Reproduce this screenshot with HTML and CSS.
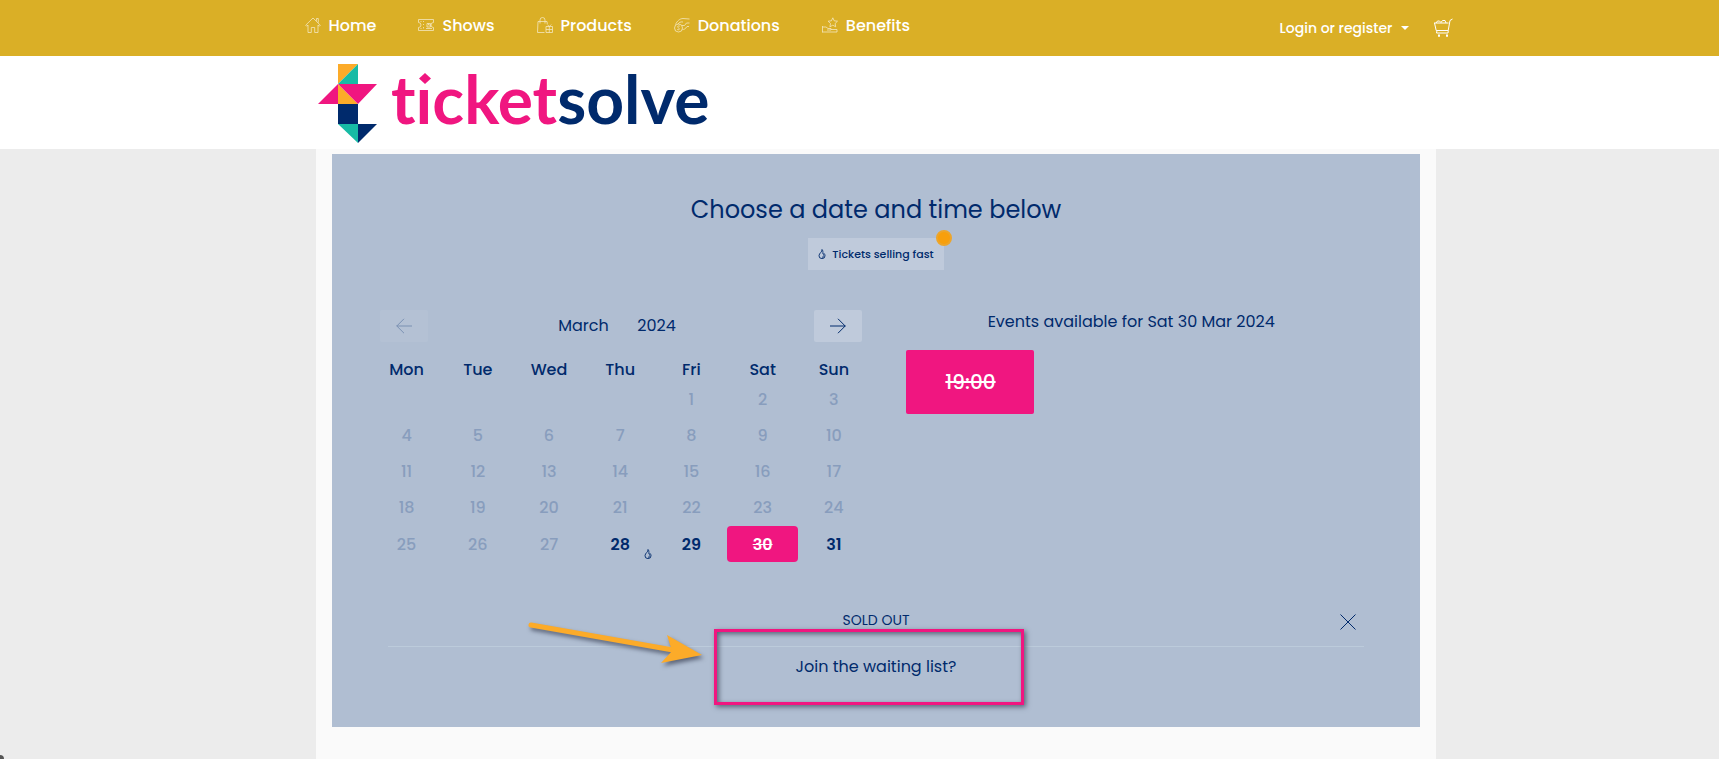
FILE: index.html
```html
<!DOCTYPE html>
<html lang="en">
<head>
    <meta charset="UTF-8">
    <meta name="viewport" content="width=device-width, initial-scale=1.0">
    <title>Ticketsolve</title>
    <link rel="stylesheet" href="styles.css">
</head>
<body>
    <nav class="topbar">
        <div class="topbar-inner">
            <ul class="menu">
                <li><a href="#">
                    <svg viewBox="0 0 16 16"><path d="M.7 8.200 8 1l7.300 7.200-1 1L13 8v7.500H9.700v-5H6.300v5H3V8L1.700 9.200zM11.500 3.800V1.500h1.800v4.200"/></svg>
                    Home</a></li>
                <li><a href="#">
                    <svg viewBox="0 0 16 16"><path d="M.5 2.500h15v3a2.500 2.500 0 0 0 0 5v3H.500v-3a2.500 2.500 0 0 0 0-5zM5.500 4v1M5.500 7v1M5.500 10v1.500M2.500 4.500h1M2.500 11.500h1M9 6.500h3.500v3.500H9zM10.500 6.500v1.500h2M8 11.500h6"/></svg>
                    Shows</a></li>
                <li><a href="#">
                    <svg viewBox="0 0 16 16"><path d="M7.500 15.500H.500L1 4.500h9l.3 2.500M3 6.500V3a2.500 2.500 0 0 1 5 0v3.500M9 9.500h6.500v6H9zM9 12.500h6.500M12.300 9.500v6M12.300 9.500l-2-2M12.300 9.500l2-2"/></svg>
                    Products</a></li>
                <li><a href="#">
                    <svg viewBox="0 0 16 16"><circle cx="4.500" cy="11" r="4"/><path d="M5.800 9.200c-2-1-3 1-1.300 1.700s.8 2.600-1.300 1.600M1.500 7.500C3 4 6 1.500 9 1.500l6.500.5M15.500 6h-3l-2 2.500H8M9 5C6.500 4.500 5 5.500 4 7M15 9.500h-2c-1.500 2.500-3 3-4.500 3"/></svg>
                    Donations</a></li>
                <li><a href="#">
                    <svg viewBox="0 0 16 16"><path d="M10.800.8l1.400 3 3.300.4-2.400 2.300.6 3.300-2.900-1.600-2.900 1.600.6-3.300-2.400-2.300 3.300-.4zM.500 9v6.500M.500 10H4l2 1.500h3V13H5M9 12.500h6v2.500H.500"/></svg>
                    Benefits</a></li>
            </ul>
            <div class="account">
                <button type="button" class="login">Login or register <span class="caret"></span></button>
                <a href="#" class="cart" aria-label="Basket">
                    <svg viewBox="0 0 20 20"><path d="M1 5h14.500M1.500 5l1.700 7.500h12L17 2.500l2.500-1.500M4 12.500l-.5 2.500H15l.3-2.500M3 5l1.500-2h2L8 4.500l1.500-2h2.500l1 2.500M5.500 16.500v2h1v-2M13.500 16.500v2h1v-2"/></svg>
                </a>
            </div>
        </div>
    </nav>

    <header class="brand">
        <a href="#" class="brand-link">
            <svg class="logo" viewBox="0 0 400 80" role="img" aria-label="ticketsolve">
                <path class="orange" d="M20 0h20L20 20zM20 20l20 20H20z"/>
                <path class="teal" d="M40 0v20H20zM20 60h20v19z"/>
                <path class="pink" d="M0 40l20-20v20zM20 20h39L40 40z"/>
                <path class="navy" d="M20 40h20v20H20zM40 60h19L40 79z"/>
                <text x="73" y="60"><tspan class="pink">ticket</tspan><tspan class="navy">solve</tspan></text>
                <circle class="white" cx="107" cy="14" r="8"/>
                <path class="pink" d="M107 9l6 5.500-6 5.500-6-5.500z"/>
            </svg>
        </a>
    </header>

    <main class="page">
        <div class="container">
            <section class="panel">
                <h1>Choose a date and time below</h1>
                <div class="legend">
                    <svg class="flame" viewBox="0 0 8 10"><path d="M4 .5C4.500 3 1 4 1 6.800a2.900 2.700 0 0 0 6 0C7 5.500 6.500 5 6 4.500 6 6 5 5.500 4.800 4.500 5 3 5 1.500 4 .5zM5 9c-.5-1.500 0-2 1.200-2.300"/></svg>
                    Tickets selling fast
                    <span class="dot"></span>
                </div>

                <div class="columns">
                    <div class="calendar">
                        <div class="calendar-head">
                            <button type="button" class="arrow-btn" disabled aria-label="Previous month">
                                <svg viewBox="0 0 16 16"><path d="M16 8H.500M8 .8.800 8 8 15.200"/></svg>
                            </button>
                            <div class="month">
                                <select aria-label="Month"><option>March</option></select>
                                <select aria-label="Year"><option>2024</option></select>
                            </div>
                            <button type="button" class="arrow-btn" aria-label="Next month">
                                <svg viewBox="0 0 16 16"><path d="M0 8h15.500M8 .8 15.200 8 8 15.200"/></svg>
                            </button>
                        </div>
                        <table>
                            <thead>
                                <tr><th>Mon</th><th>Tue</th><th>Wed</th><th>Thu</th><th>Fri</th><th>Sat</th><th>Sun</th></tr>
                            </thead>
                            <tbody>
                                <tr><td></td><td></td><td></td><td></td><td>1</td><td>2</td><td>3</td></tr>
                                <tr><td>4</td><td>5</td><td>6</td><td>7</td><td>8</td><td>9</td><td>10</td></tr>
                                <tr><td>11</td><td>12</td><td>13</td><td>14</td><td>15</td><td>16</td><td>17</td></tr>
                                <tr><td>18</td><td>19</td><td>20</td><td>21</td><td>22</td><td>23</td><td>24</td></tr>
                                <tr class="open">
                                    <td>25</td><td>26</td><td>27</td>
                                    <td>
                                        <button type="button" class="day">28
                                            <svg class="flame" viewBox="0 0 8 10"><path d="M4 .5C4.500 3 1 4 1 6.800a2.900 2.700 0 0 0 6 0C7 5.500 6.500 5 6 4.500 6 6 5 5.500 4.800 4.500 5 3 5 1.500 4 .5zM5 9c-.5-1.500 0-2 1.200-2.300"/></svg>
                                        </button>
                                    </td>
                                    <td><button type="button" class="day">29</button></td>
                                    <td><button type="button" class="day selected">30</button></td>
                                    <td><button type="button" class="day">31</button></td>
                                </tr>
                            </tbody>
                        </table>
                    </div>

                    <div class="events">
                        <h2>Events available for Sat 30 Mar 2024</h2>
                        <button type="button" class="time">19:00</button>
                    </div>
                </div>

                <div class="waiting">
                    <div class="waiting-head">
                        <span>SOLD OUT</span>
                        <button type="button" class="close" aria-label="Close">
                            <svg viewBox="0 0 16 16"><path d="M.5.5l15 15M15.500.5l-15 15"/></svg>
                        </button>
                    </div>
                    <a href="#" class="join">Join the waiting list?</a>
                    <span class="highlight"></span>
                    <svg class="pointer" viewBox="0 0 180 44">
                        <path class="shaft" d="M3 5l142 25"/>
                        <path class="head" d="M139 15l35 20-41 8 11-12z"/>
                    </svg>
                </div>
            </section>
        </div>
    </main>
    <span class="corner"></span>
</body>
</html>
```

FILE: styles.css
```css
* {
    box-sizing: border-box;
}
body {
    margin: 0;
    min-height: 100vh;
    display: flex;
    flex-direction: column;
    background-color: #ececec;
    color: #002a6c;
    font-family: Poppins, Inter, sans-serif;
    font-size: 16px;
}
a {
    color: inherit;
    text-decoration: none;
}
button, select {
    font: inherit;
    color: inherit;
    background: none;
    border: none;
    padding: 0;
    cursor: pointer;
}
svg {
    fill: none;
    stroke: currentColor;
}

/* top bar */
.topbar {
    background-color: #daaf26;
    color: #fff;
    padding-left: 38px;
}
.topbar-inner {
    max-width: 1148px;
    height: 56px;
    margin: 0 auto;
    display: flex;
    justify-content: space-between;
    align-items: center;
}
.menu {
    display: flex;
    gap: 42px;
    margin: 0;
    padding: 0 0 6px;
    list-style: none;
    font-weight: 500;
}
.menu a {
    display: flex;
    align-items: center;
    gap: 8px;
}
.menu svg {
    width: 16px;
    height: 16px;
    stroke-width: 0.8;
    opacity: 0.7;
}
.account {
    display: flex;
    align-items: center;
    gap: 24px;
}
.login {
    display: flex;
    align-items: center;
    gap: 8px;
    font-size: 14px;
    font-weight: 500;
}
.caret {
    border: 4px solid transparent;
    border-top-color: #fff;
    border-bottom: none;
}
.cart svg {
    display: block;
    width: 20px;
    height: 20px;
}

/* logo */
.brand {
    background-color: #fff;
    padding-left: 33px;
}
.brand-link {
    display: block;
    max-width: 1120px;
    margin: 0 auto;
    padding: 8px 2px 5px;
}
.logo {
    display: block;
    width: 400px;
    height: 80px;
    overflow: visible;
    stroke: none;
    font-family: Lato, sans-serif;
    font-size: 66px;
    font-weight: bold;
    font-variant-ligatures: none;
}
.orange { fill: #fcab29; }
.teal { fill: #17bba5; }
.pink { fill: #f01680; }
.navy { fill: #002a6c; }
.white { fill: #fff; }

/* booking panel */
.page {
    flex: 1;
    display: flex;
    padding-left: 33px;
}
.container {
    flex: 1;
    max-width: 1120px;
    margin: 0 auto;
    padding: 5px 16px 32px;
    background-color: #fafafa;
}
.panel {
    background-color: #b0bed2;
    padding-top: 36px;
    text-align: center;
}
h1 {
    margin: 0;
    font-size: 24px;
    font-weight: 400;
    line-height: 40px;
}
.legend {
    position: relative;
    display: inline-flex;
    align-items: center;
    gap: 6px;
    height: 32px;
    margin-top: 8px;
    padding: 0 10px;
    background-color: #bfcadb;
    font-size: 11px;
    font-weight: 500;
}
.flame {
    width: 8px;
    height: 10px;
    stroke-width: 0.9;
}
.dot {
    position: absolute;
    top: -8px;
    right: -8px;
    width: 16px;
    height: 16px;
    border: 2px solid #eda52a;
    border-radius: 50%;
    background-color: #f79f0c;
}
.columns {
    display: grid;
    grid-template-columns: 10fr 9fr;
    gap: 36px;
    padding: 40px 64px 0 39px;
}
.calendar {
    padding-right: 1px;
}
.calendar-head {
    display: flex;
    justify-content: space-between;
    align-items: center;
    padding: 0 7px 0 9px;
}
.arrow-btn {
    display: flex;
    align-items: center;
    justify-content: center;
    width: 48px;
    height: 32px;
    border-radius: 2px;
    background-color: #bfcadb;
}
.arrow-btn:disabled {
    opacity: 0.3;
    cursor: default;
}
.arrow-btn svg, .close svg {
    width: 16px;
    height: 16px;
}
.month {
    display: flex;
    gap: 28px;
    padding: 0 8px 2px 0;
}
.month select {
    appearance: none;
}
table {
    width: 100%;
    margin-top: 15px;
    border-collapse: collapse;
    table-layout: fixed;
}
th {
    height: 23px;
    padding: 0;
    font-weight: 500;
}
td {
    height: 36px;
    padding: 0 0 2px;
    color: #889dbd;
    font-weight: 500;
}
.open td {
    padding: 0;
}
.day {
    position: relative;
    display: block;
    width: 100%;
    height: 36px;
    border-radius: 4px;
    color: #002a6c;
    font-weight: 600;
}
.day .flame {
    position: absolute;
    right: 4px;
    bottom: 3px;
}
.day.selected {
    background-color: #f01680;
    color: #fff;
    text-decoration: line-through;
}
h2 {
    margin: 0;
    font-size: 16px;
    font-weight: 400;
    line-height: 24px;
}
.events {
    text-align: left;
}
.events h2 {
    text-align: center;
}
.time {
    width: 128px;
    height: 64px;
    margin-top: 16px;
    border-radius: 2px;
    background-color: #f01680;
    color: #fff;
    font-size: 20px;
    font-weight: 500;
    text-decoration: line-through;
}

/* waiting list */
.waiting {
    position: relative;
    margin: 44px 56px 0;
    padding-bottom: 48px;
}
.waiting-head {
    position: relative;
    height: 41px;
    padding-top: 4px;
    border-bottom: 1px solid #bccbdb;
    font-size: 14px;
    line-height: 20px;
}
.close {
    position: absolute;
    top: 8px;
    right: 8px;
    width: 16px;
    height: 16px;
}
.close svg {
    display: block;
}
.join {
    display: block;
    margin-top: 8px;
    line-height: 24px;
}
.highlight {
    position: absolute;
    top: 23px;
    left: calc(50% - 162px);
    width: 310px;
    height: 76px;
    border: 3px solid #f01680;
    box-shadow: 2px 2px 5px #5b6478, inset 2px 2px 5px #5b6478;
    pointer-events: none;
}
.pointer {
    position: absolute;
    top: 14px;
    left: calc(50% - 348px);
    width: 180px;
    height: 44px;
    overflow: visible;
    filter: drop-shadow(2px 3px 2px #5b6478);
    pointer-events: none;
}
.shaft {
    stroke: #fcab29;
    stroke-width: 5;
    stroke-linecap: round;
}
.head {
    fill: #fcab29;
    stroke: none;
}
.corner {
    position: fixed;
    left: -4px;
    bottom: -4px;
    width: 8px;
    height: 8px;
    border-radius: 50%;
    background-color: #555;
}
```
